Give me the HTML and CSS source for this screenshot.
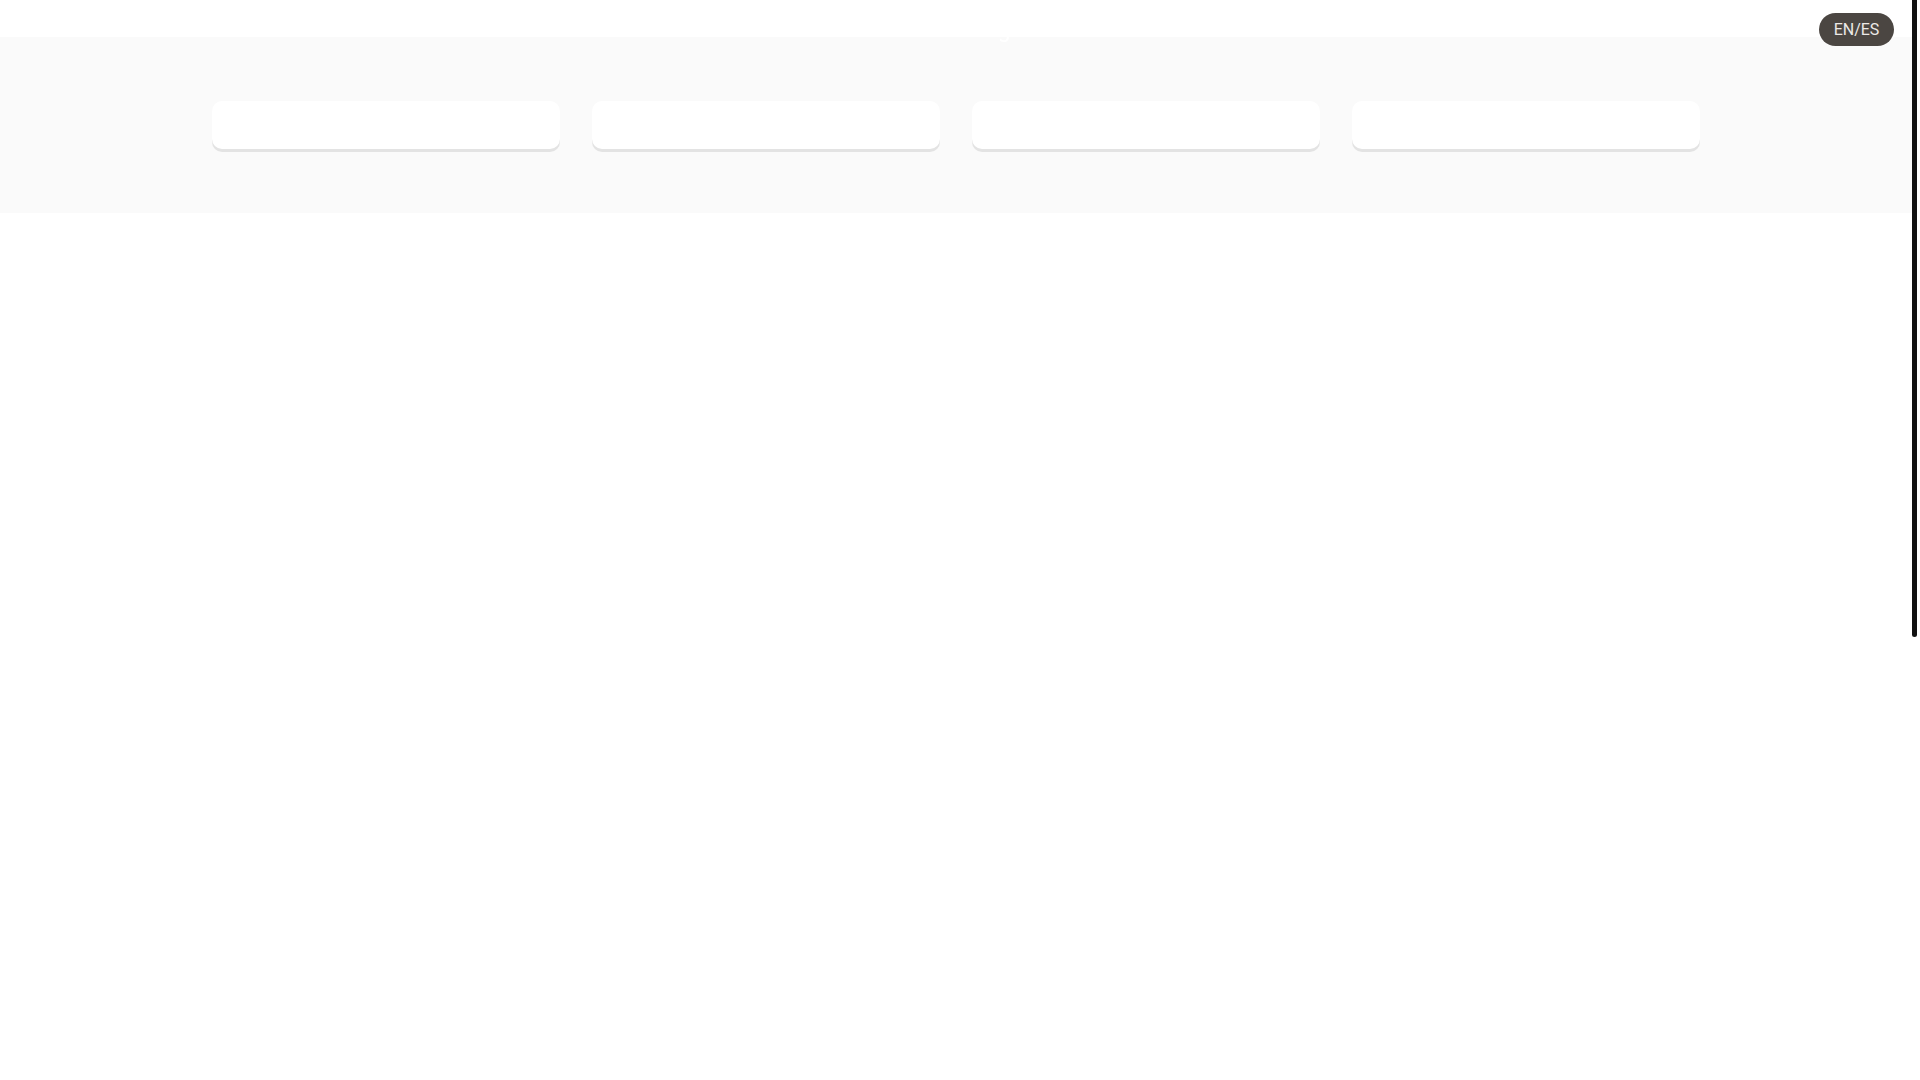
FILE: index.html
```html
<!DOCTYPE html>
<html lang="en">
<head>
<meta charset="utf-8">
<title>Page</title>
<link rel="stylesheet" href="styles.css">
</head>
<body>
<div class="page">
  <header class="top">
    <span class="top-title">Loading</span>
  </header>
  <section class="band">
    <div class="cards">
      <div class="card"></div>
      <div class="card"></div>
      <div class="card"></div>
      <div class="card"></div>
    </div>
  </section>
  <main class="content"></main>
</div>
<div class="rail"><div class="thumb"></div></div>
<button class="lang">EN/ES</button>
</body>
</html>
```

FILE: styles.css
```css
html, body {
  margin: 0;
  padding: 0;
  background: #ffffff;
  font-family: Roboto, "Liberation Sans", sans-serif;
  height: 100%;
  overflow: hidden;
}
body {
  display: flex;
}
.page {
  flex: 1;
  min-width: 0;
}
.rail {
  width: 8px;
  flex: none;
  background: #ffffff;
}
.thumb {
  width: 5px;
  height: 637px;
  background: #111111;
  border-radius: 0 0 3px 3px;
}
.top {
  height: 37px;
  display: flex;
  justify-content: center;
  align-items: flex-end;
  position: relative;
  z-index: 1;
}
.top-title {
  color: #ffffff;
  font-size: 22px;
  line-height: 22px;
  letter-spacing: 6px;
  margin-bottom: -4px;
}
.band {
  background: #fafafa;
  padding: 64px 0 64px;
}
.cards {
  display: flex;
  justify-content: center;
  gap: 32px;
}
.card {
  width: 348px;
  height: 48px;
  background: #ffffff;
  border-radius: 10px;
  box-shadow: 0 3px 0 #e3e3e3;
}
.content {
  height: 800px;
}
.lang {
  position: fixed;
  top: 13px;
  right: 26px;
  width: 75px;
  height: 33px;
  border: none;
  border-radius: 17px;
  background: #4b4642;
  color: #ece9e6;
  font-family: Roboto, "Liberation Sans", sans-serif;
  font-size: 16px;
  padding: 0;
  cursor: pointer;
}
```
